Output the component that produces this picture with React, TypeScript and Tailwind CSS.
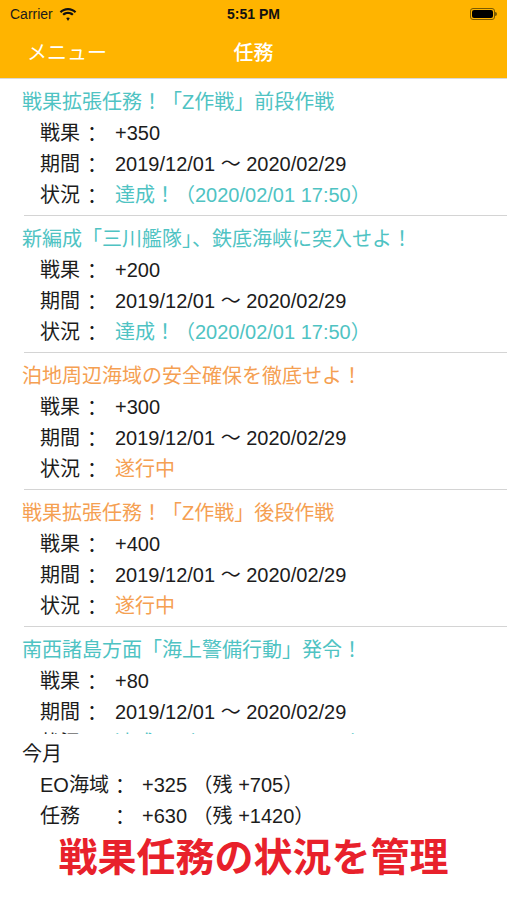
import React from "react";

interface Quest {
  title: string;
  gain: string;
  status: string;
  done: boolean;
}

const quests: Quest[] = [
  { title: "戦果拡張任務！「Z作戦」前段作戦", gain: "+350", status: "達成！（2020/02/01 17:50）", done: true },
  { title: "新編成「三川艦隊」、鉄底海峡に突入せよ！", gain: "+200", status: "達成！（2020/02/01 17:50）", done: true },
  { title: "泊地周辺海域の安全確保を徹底せよ！", gain: "+300", status: "遂行中", done: false },
  { title: "戦果拡張任務！「Z作戦」後段作戦", gain: "+400", status: "遂行中", done: false },
  { title: "南西諸島方面「海上警備行動」発令！", gain: "+80", status: "達成！（2020/02/01 17:50）", done: true },
];

const font = { fontFamily: '"Liberation Sans", "Noto Sans CJK JP", sans-serif' };

// ステータスバーのWi-Fiアイコン
const Wifi = () => (
  <svg width="18" height="13" viewBox="0 0 18 13" fill="#111">
    <path d="M9 2.2c2.6 0 5 1 6.8 2.7l1.5-1.5C15.1 1.3 12.2 0 9 0S2.9 1.3.7 3.4l1.5 1.5C4 3.2 6.4 2.2 9 2.2z" />
    <path d="M9 5.9c1.6 0 3 .6 4.1 1.6l1.5-1.5C13.1 4.6 11.1 3.7 9 3.7s-4.1.9-5.6 2.3l1.5 1.5C6 6.5 7.4 5.9 9 5.9z" />
    <path d="M9 9.4c.7 0 1.3.3 1.8.7L9 12.9 7.2 10.1c.5-.4 1.1-.7 1.8-.7z" />
  </svg>
);

const Battery = () => (
  <div className="flex items-center">
    <div className="w-[25px] h-[12px] rounded-[3px] border border-[#7a5a00] p-[1px]">
      <div className="w-full h-full rounded-[2px] bg-black" />
    </div>
    <div className="w-[2px] h-[4px] rounded-r-sm bg-[#7a5a00]" />
  </div>
);

const rowCls = "flex items-baseline h-[31px] pt-[5px] leading-[26px] text-[20px] text-[#1c1c1c] whitespace-nowrap";
// 全角コロンが少し上に見えるので下げる
const colonCls = "w-[20px] ml-[2px] translate-y-[2px]";

const Row = ({ label, value, cls }: { label: string; value: string; cls?: string }) => (
  <div className={`${rowCls} pl-[40px]`}>
    <span className="w-[40px]">{label}</span>
    <span className={colonCls}>：</span>
    <span className={`pl-[13px] ${cls ?? ""}`}>{value}</span>
  </div>
);

const App = () => {
  return (
    <div className="w-[507px] h-[900px] bg-white overflow-hidden" style={font}>
      <div className="bg-[#ffb400] border-b border-[#d9d9d9]">
        <div className="relative h-[28px] flex items-center justify-between px-[10px]">
          <div className="flex items-center gap-[6px] text-[14px] text-[#1a1a1a]">
            Carrier <Wifi />
          </div>
          <div className="absolute left-0 right-0 text-center text-[14px] font-bold text-[#111]">5:51 PM</div>
          <Battery />
        </div>
        <div className="relative h-[50px] flex items-center">
          <span className="pl-[27px] text-[20px] text-white">メニュー</span>
          <span className="absolute left-0 right-0 text-center text-[20px] font-medium text-white pointer-events-none">任務</span>
        </div>
      </div>

      <div className="h-[655px] overflow-hidden">
        {quests.map((q, i) => {
          const color = q.done ? "text-[#4fc3c3]" : "text-[#f5a052]";
          return (
            <div key={i}>
              <div className="pt-[5px] pb-[7px]">
                <div className={`${rowCls} pl-[22px] ${color}`}>{q.title}</div>
                <Row label="戦果" value={q.gain} />
                <Row label="期間" value="2019/12/01 〜 2020/02/29" />
                <Row label="状況" value={q.status} cls={color} />
              </div>
              <div className="ml-[24px] h-px bg-[#d4d4d4]" />
            </div>
          );
        })}
      </div>

      <div className="pt-[2px]">
        <div className={`${rowCls} pl-[22px]`}>今月</div>
        <div className={`${rowCls} pl-[40px]`}>
          <span className="w-[68px]">EO海域</span>
          <span className={colonCls}>：</span>
          <span className="pl-[12px]">+325 （残 +705）</span>
        </div>
        <div className={`${rowCls} pl-[40px]`}>
          <span className="w-[68px]">任務</span>
          <span className={colonCls}>：</span>
          <span className="pl-[12px]">+630 （残 +1420）</span>
        </div>
        <div className="h-[48px] mt-[5px] flex items-center justify-center text-[39px] font-bold text-[#e8212b]">
          戦果任務の状況を管理
        </div>
      </div>
    </div>
  );
};

export default App;
